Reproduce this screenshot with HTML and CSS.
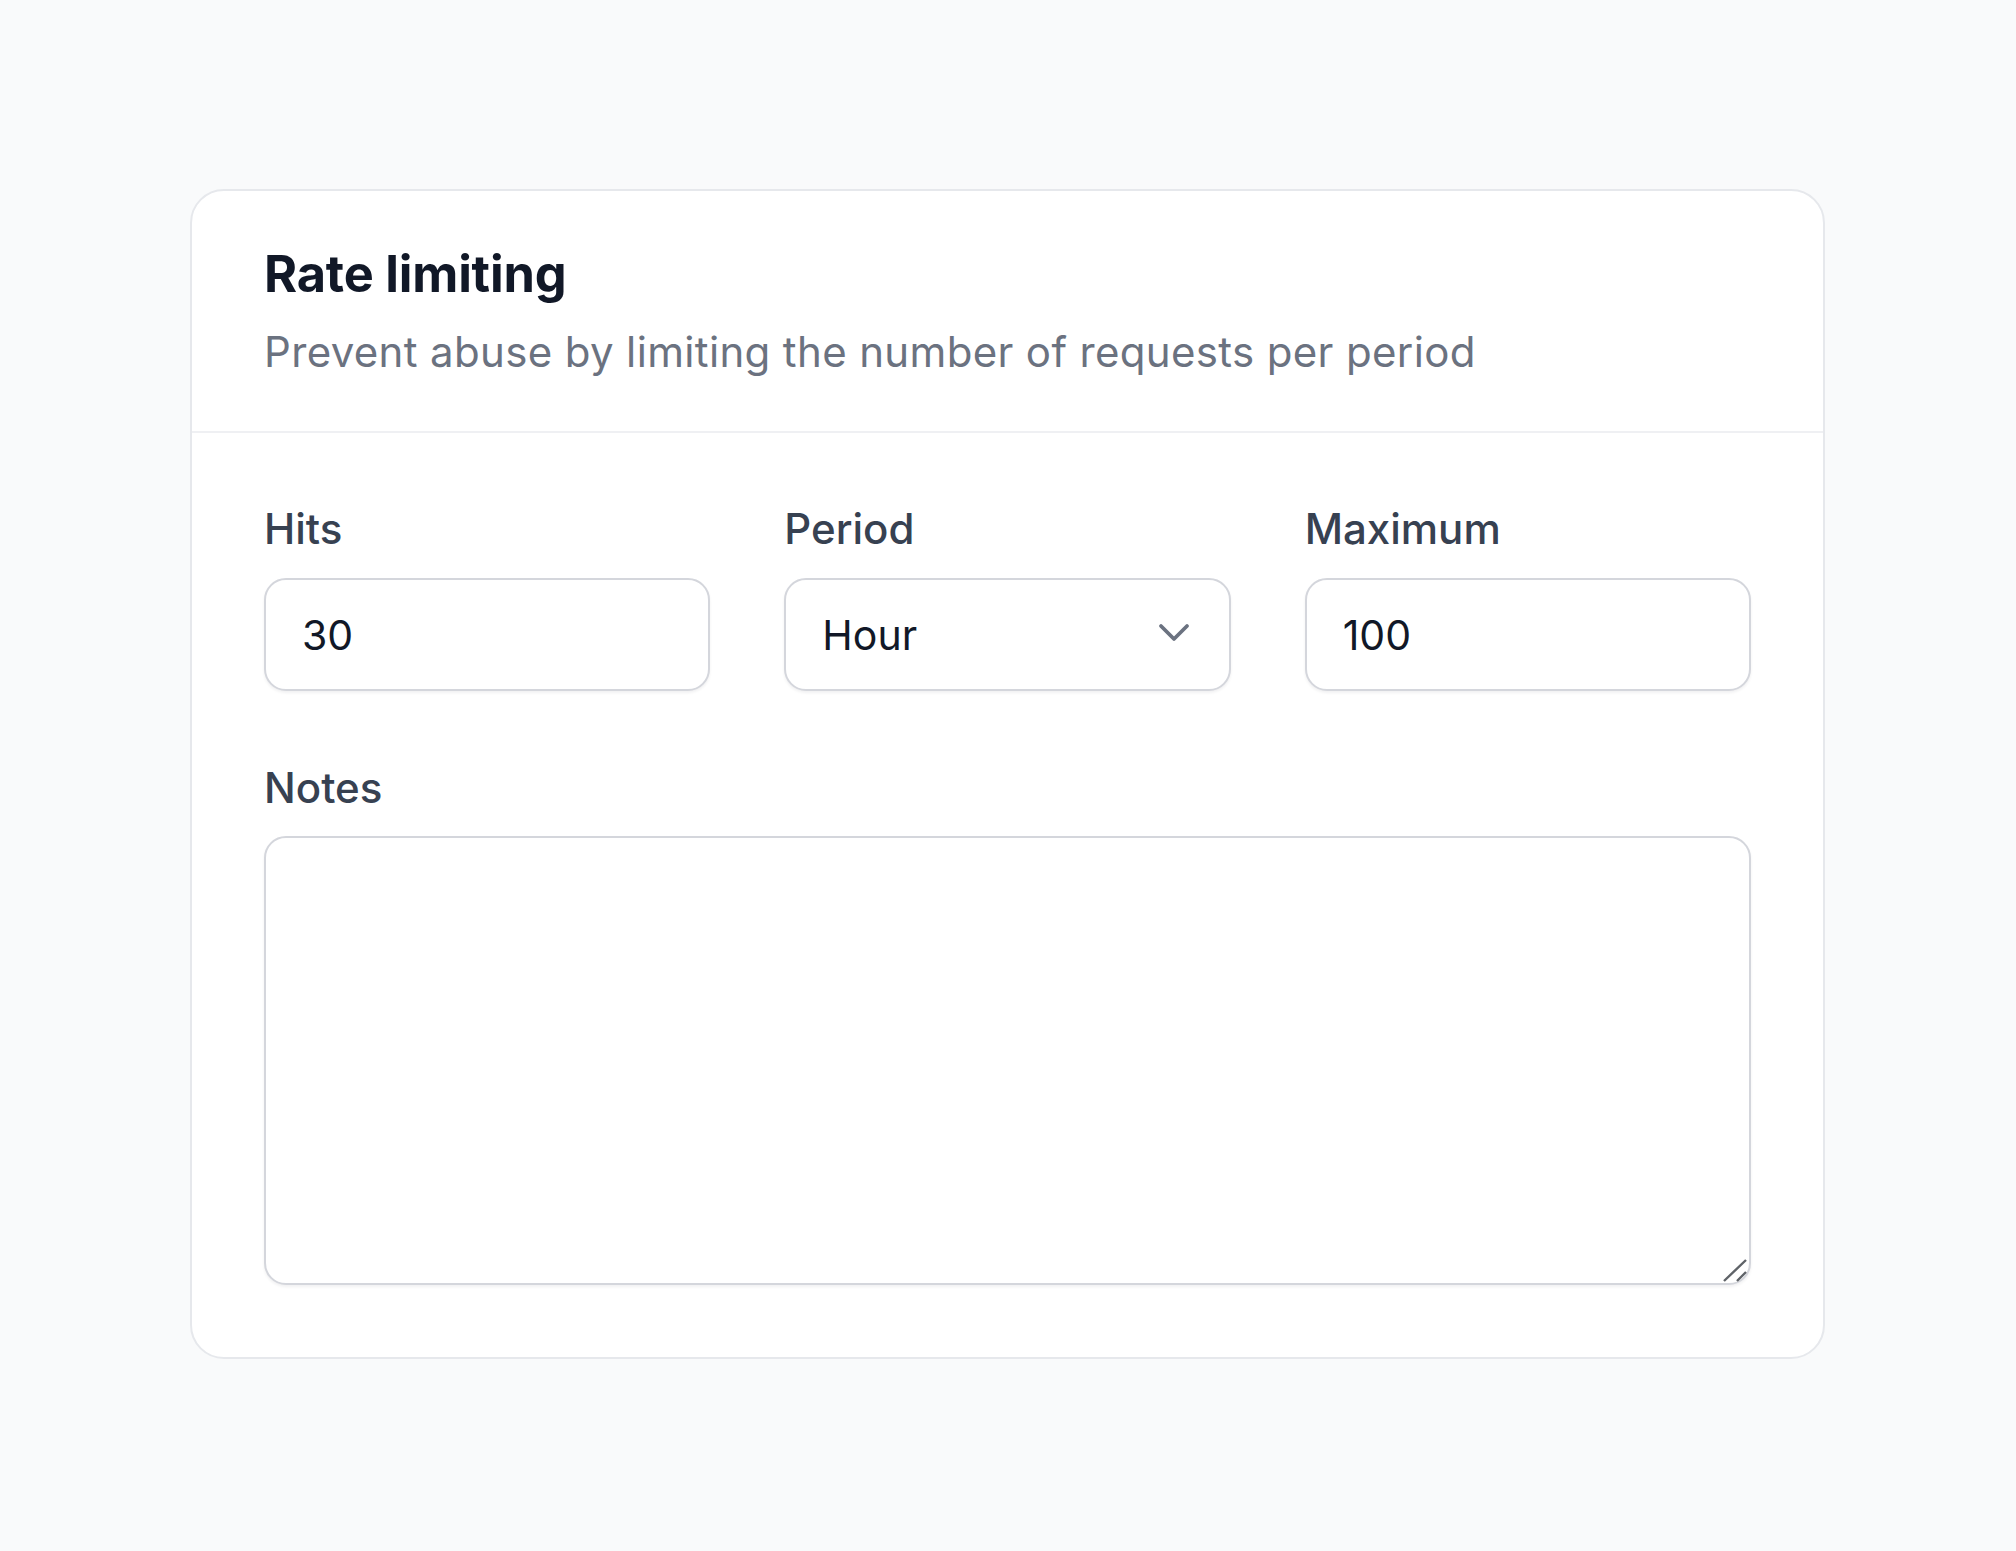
FILE: index.html
```html
<!DOCTYPE html>
<html lang="en">
<head>
<meta charset="utf-8">
<title>Rate limiting</title>
<link rel="stylesheet" href="styles.css">
</head>
<body>
<main class="page">
  <section class="card">
    <header class="card-header">
      <h1 class="title">Rate limiting</h1>
      <p class="subtitle">Prevent abuse by limiting the number of requests per period</p>
    </header>
    <div class="card-body">
      <div class="row">
        <div class="field">
          <label class="label" for="hits">Hits</label>
          <input class="control" id="hits" type="text" value="30">
        </div>
        <div class="field">
          <label class="label" for="period">Period</label>
          <div class="select-wrap">
            <select class="control select" id="period">
              <option>Hour</option>
              <option>Minute</option>
              <option>Day</option>
            </select>
            <svg class="chevron" viewBox="0 0 32 20" width="32" height="20" aria-hidden="true"><path d="M3 3l13 13 13-13" fill="none" stroke="currentColor" stroke-width="3.8" stroke-linecap="round" stroke-linejoin="round"/></svg>
          </div>
        </div>
        <div class="field">
          <label class="label" for="max">Maximum</label>
          <input class="control" id="max" type="text" value="100">
        </div>
      </div>
      <div class="field notes">
        <label class="label" for="notes">Notes</label>
        <div class="textarea-wrap">
          <textarea class="control textarea" id="notes"></textarea>
          <svg class="grip" viewBox="0 0 26 24" width="26" height="24" aria-hidden="true"><path d="M1 22L23 1M14 22L23 13" fill="none" stroke="#5f6368" stroke-width="2.4"/></svg>
        </div>
      </div>
    </div>
  </section>
</main>
</body>
</html>
```

FILE: styles.css
```css
* { box-sizing: border-box; }
html, body { margin: 0; padding: 0; }
body {
  background: #f9fafb;
  font-family: Inter, "Noto Sans", "Liberation Sans", sans-serif;
  color: #111827;
}
.page {
  padding: 189px 192px 0 190px;
}
.card {
  width: 1635px;
  background: #ffffff;
  border: 2px solid #e6e8ec;
  border-radius: 34px;
}
.card-header {
  padding: 53px 72px 49px 72px;
  border-bottom: 2px solid #eff0f3;
}
.title {
  margin: 0;
  font-size: 50.5px;
  line-height: 60px;
  font-weight: 700;
  letter-spacing: -0.2px;
  color: #111827;
}
.subtitle {
  margin: 18px 0 0;
  font-size: 42px;
  line-height: 60px;
  font-weight: 400;
  letter-spacing: 0.35px;
  color: #6b7280;
}
.card-body {
  padding: 66px 72px 72px 72px;
}
.row {
  display: grid;
  grid-template-columns: repeat(3, 1fr);
  column-gap: 74px;
}
.field {
  display: flex;
  flex-direction: column;
}
.label {
  font-size: 42px;
  line-height: 59px;
  font-weight: 500;
  color: #374151;
  margin-bottom: 20px;
}
.notes { margin-top: 67px; }
.notes .label { margin-bottom: 19px; }
.control {
  font-family: inherit;
  font-size: 41px;
  color: #111827;
  height: 113px;
  width: 100%;
  padding: 0 36px;
  background: #fff;
  border: 2.5px solid #d4d6dc;
  border-radius: 22px;
  box-shadow: 0 2px 3px rgba(17, 24, 39, 0.06);
  outline: none;
}
.select-wrap { position: relative; }
.select {
  appearance: none;
  -webkit-appearance: none;
  padding-right: 90px;
}
.chevron {
  position: absolute;
  right: 41px;
  top: 45px;
  color: #6b7280;
  pointer-events: none;
}
.textarea-wrap { position: relative; }
.textarea {
  height: 449px;
  resize: vertical;
  display: block;
}
.textarea::-webkit-resizer {
  background: transparent;
}
.grip {
  position: absolute;
  right: 2px;
  bottom: 2px;
  pointer-events: none;
}
```
